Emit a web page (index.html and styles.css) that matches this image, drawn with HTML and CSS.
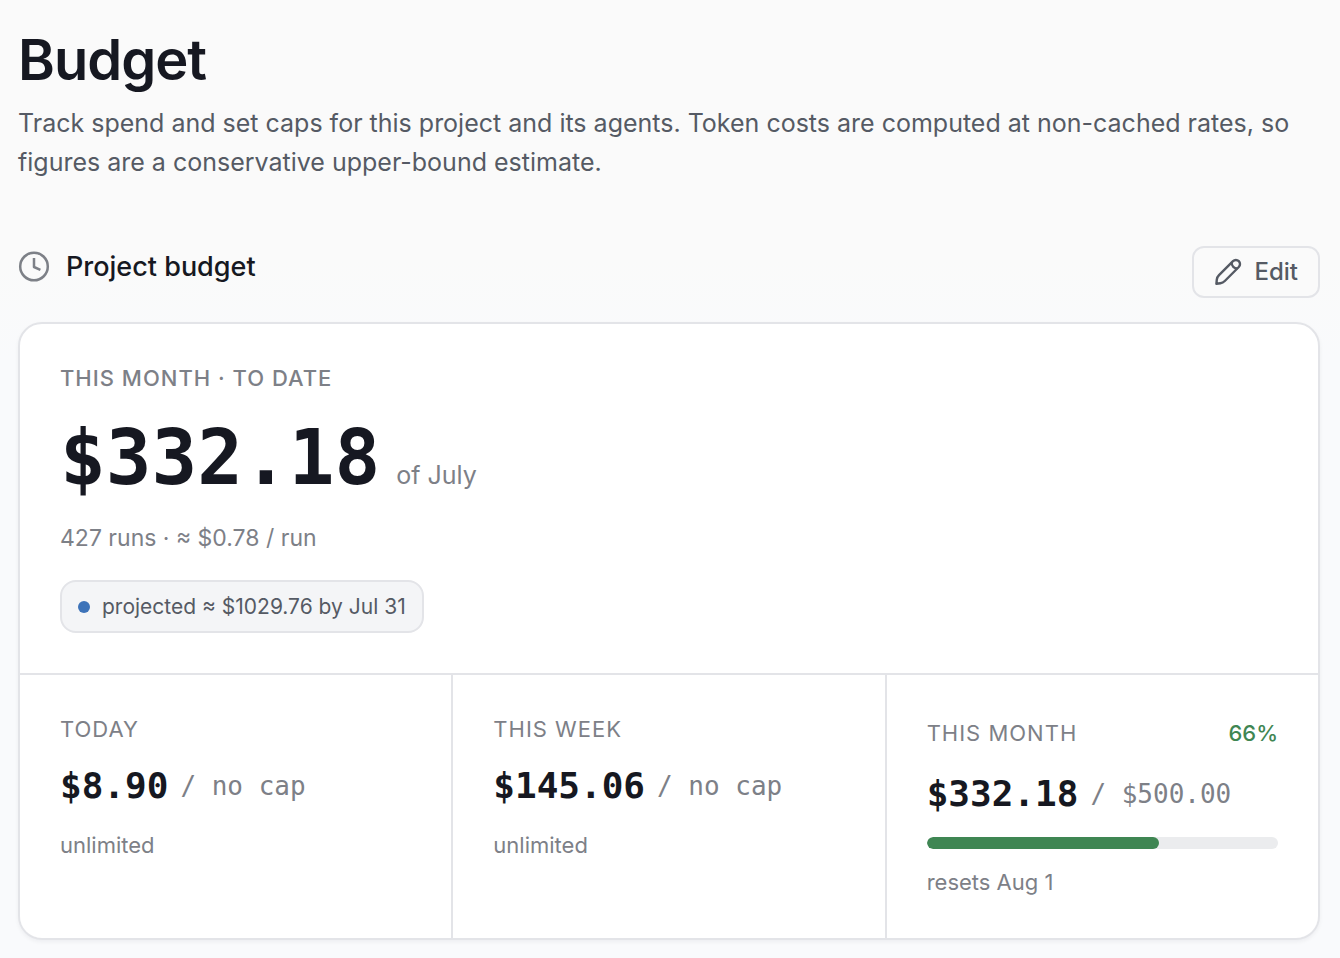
FILE: index.html
```html
<!DOCTYPE html>
<html lang="en">
<head>
    <meta charset="UTF-8">
    <meta name="viewport" content="width=device-width, initial-scale=1.0">
    <title>Budget</title>
    <link rel="stylesheet" href="styles.css">
</head>
<body>
    <main class="page">
        <header class="page-header">
            <h1>Budget</h1>
            <p>Track spend and set caps for this project and its agents. Token costs are computed at non-cached rates, so figures are a conservative upper-bound estimate.</p>
        </header>

        <section class="budget">
            <div class="section-bar">
                <h2 class="section-title">
                    <svg class="clock-icon" viewBox="0 0 32 32" aria-hidden="true">
                        <circle cx="16" cy="15.5" r="13.8"/>
                        <path d="M16 7V16L22.4 18.8"/>
                    </svg>
                    Project budget
                </h2>
                <button type="button" class="edit-btn">
                    <svg class="pencil-icon" viewBox="0 0 28 28" aria-hidden="true">
                        <path d="M2.4 25.8L2.8 21.6C3 19.8 3.8 18.4 5 17.2L19 3.2A4 4 0 0 1 24.8 9L10.8 23C9.6 24.2 8.2 25 6.4 25.2Z"/>
                        <path d="M17.6 4.8C17.8 8 20 10.4 23.4 10.4"/>
                    </svg>
                    Edit
                </button>
            </div>

            <div class="card">
                <div class="summary">
                    <h3 class="label label-strong">This month · to date</h3>
                    <div class="total">
                        <span class="total-amount">$332.18</span>
                        <span class="total-period">of July</span>
                    </div>
                    <p class="runs">427 runs · ≈ $0.78 / run</p>
                    <div class="projection"><span class="dot"></span>projected ≈ $1029.76 by Jul 31</div>
                </div>

                <div class="periods">
                    <div class="period">
                        <h3 class="label">Today</h3>
                        <div class="spend"><strong>$8.90</strong><span>/ no cap</span></div>
                        <p class="caption">unlimited</p>
                    </div>
                    <div class="period">
                        <h3 class="label">This week</h3>
                        <div class="spend"><strong>$145.06</strong><span>/ no cap</span></div>
                        <p class="caption">unlimited</p>
                    </div>
                    <div class="period">
                        <div class="period-head">
                            <h3 class="label">This month</h3>
                            <span class="percent">66%</span>
                        </div>
                        <div class="spend"><strong>$332.18</strong><span>/ $500.00</span></div>
                        <div class="meter" role="progressbar" aria-label="Monthly budget used" aria-valuemin="0" aria-valuemax="100" aria-valuenow="66">
                            <div class="meter-fill" style="width: 66%"></div>
                        </div>
                        <p class="caption">resets Aug 1</p>
                    </div>
                </div>
            </div>
        </section>
    </main>
</body>
</html>
```
FILE: styles.css
```css
:root {
    --bg: #fafafa;
    --card: #ffffff;
    --border: #e3e4e8;
    --text: #161821;
    --text-soft: #555a64;
    --text-muted: #7d8087;
    --green: #3f8653;
    --blue: #3d73b9;
    --sans: Inter, "Liberation Sans", sans-serif;
    --mono: "DejaVu Sans Mono", "Liberation Mono", monospace;
}

* {
    box-sizing: border-box;
}

body {
    margin: 0;
    background: linear-gradient(#fafafa 260px, #f9fafc 360px);
    color: var(--text);
    font-family: var(--sans);
}

h1, h2, h3, p {
    margin: 0;
}

.page {
    padding: 28px 20px 18px 18px;
}

h1 {
    font-size: 56px;
    font-weight: 600;
    line-height: 64px;
    letter-spacing: -1px;
}

.page-header p {
    margin-top: 12px;
    font-size: 25px;
    line-height: 39px;
    color: var(--text-soft);
}

.section-bar {
    display: flex;
    justify-content: space-between;
    align-items: flex-start;
    margin-top: 64px;
}

.section-title {
    display: flex;
    align-items: center;
    gap: 16px;
    font-size: 27px;
    font-weight: 500;
    line-height: 41px;
}

.clock-icon,
.pencil-icon {
    fill: none;
    stroke: currentColor;
    stroke-linejoin: round;
}

.clock-icon {
    width: 32px;
    height: 32px;
    color: var(--text-muted);
    stroke-width: 2.5;
}

.pencil-icon {
    width: 28px;
    height: 28px;
    stroke-width: 2.4;
}

.edit-btn {
    display: flex;
    align-items: center;
    gap: 12px;
    padding: 8px 20px;
    border: 2px solid var(--border);
    border-radius: 12px;
    background: var(--bg);
    color: var(--text-soft);
    font-family: inherit;
    font-size: 24px;
    font-weight: 500;
    line-height: 32px;
    cursor: pointer;
}

.card {
    margin-top: 24px;
    overflow: hidden;
    border: 2px solid var(--border);
    border-radius: 24px;
    background: var(--card);
    box-shadow: 0 2px 4px rgba(22, 24, 33, 0.05);
}

.summary {
    padding: 40px;
    border-bottom: 2px solid var(--border);
}

.label {
    font-size: 22px;
    font-weight: 400;
    line-height: 28px;
    letter-spacing: 1px;
    text-transform: uppercase;
    color: var(--text-muted);
}

.label-strong {
    font-weight: 500;
}

.total {
    display: flex;
    align-items: baseline;
    gap: 16px;
    margin-top: 26px;
}

.total-amount {
    font-family: var(--mono);
    font-size: 76px;
    font-weight: 700;
    line-height: 80px;
}

.total-period {
    font-size: 25px;
    color: var(--text-muted);
}

.runs {
    margin-top: 22px;
    font-size: 23px;
    line-height: 36px;
    color: var(--text-muted);
}

.projection {
    display: inline-flex;
    align-items: center;
    gap: 12px;
    margin-top: 24px;
    padding: 8px 16px;
    border: 2px solid var(--border);
    border-radius: 16px;
    background: #f4f5f7;
    color: var(--text-soft);
    font-size: 21px;
    line-height: 33px;
}

.dot {
    width: 12px;
    height: 12px;
    border-radius: 50%;
    background: var(--blue);
}

/* the gap shows through as the column dividers */
.periods {
    display: grid;
    grid-template-columns: repeat(3, 1fr);
    gap: 2px;
    background: var(--border);
}

.period {
    padding: 40px;
    background: var(--card);
}

.period-head {
    display: flex;
    justify-content: space-between;
    align-items: center;
    height: 36px;
}

.percent {
    font-size: 22px;
    font-weight: 500;
    color: var(--green);
}

.spend {
    display: flex;
    align-items: center;
    gap: 12px;
    margin-top: 20px;
    font-family: var(--mono);
    font-size: 26px;
    line-height: 46px;
    color: var(--text-muted);
}

.spend strong {
    font-size: 36px;
    color: var(--text);
}

.caption {
    margin-top: 20px;
    font-size: 22px;
    line-height: 32px;
    color: var(--text-muted);
}

.meter {
    height: 12px;
    margin-top: 20px;
    overflow: hidden;
    border-radius: 6px;
    background: #ebecee;
}

.meter-fill {
    height: 100%;
    border-radius: 6px;
    background: var(--green);
}

.meter + .caption {
    margin-top: 17px;
}
```
